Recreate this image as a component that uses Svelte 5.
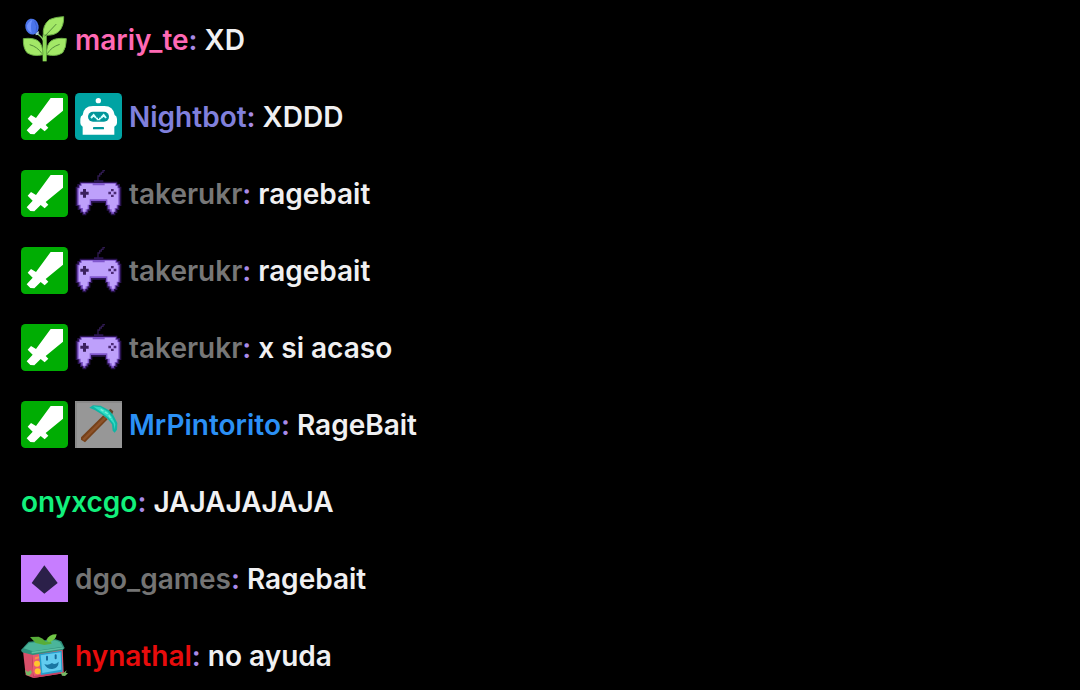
<script>
  const messages = [
    { badges: ['plant'], user: 'mariy_te', color: '#ff69b4', text: 'XD' },
    { badges: ['sword', 'bot'], user: 'Nightbot', color: '#8080dc', text: 'XDDD' },
    { badges: ['sword', 'pad'], user: 'takerukr', color: '#777777', text: 'ragebait' },
    { badges: ['sword', 'pad'], user: 'takerukr', color: '#777777', text: 'ragebait' },
    { badges: ['sword', 'pad'], user: 'takerukr', color: '#777777', text: 'x si acaso' },
    { badges: ['sword', 'pickaxe'], user: 'MrPintorito', color: '#2b90f5', text: 'RageBait' },
    { badges: [], user: 'onyxcgo', color: '#12f07c', text: 'JAJAJAJAJA' },
    { badges: ['gem'], user: 'dgo_games', color: '#747474', text: 'Ragebait' },
    { badges: ['house'], user: 'hynathal', color: '#e80c0c', text: 'no ayuda' }
  ];
</script>

{#snippet badge(kind)}
  {#if kind === 'sword'}
    <svg class="badge" viewBox="21 21 141 141" aria-hidden="true">
      <rect x="21" y="21" width="141" height="141" rx="13" fill="#00ad03" />
      <path d="M110 36H147V74L95 117L103 125L92 136L80 126L61 145L49 144L38 133L56 113L41 98L51 87L66 96Z" fill="#fff" />
    </svg>
  {:else if kind === 'bot'}
    <svg class="badge" viewBox="21 21 141 141" aria-hidden="true">
      <rect x="21" y="21" width="141" height="141" rx="13" fill="#00a3a3" />
      <circle cx="91" cy="44" r="8" fill="#fff" />
      <path d="M44 87Q47 60 75 60H109Q136 60 140 87Q147 90 147 99V111Q147 119 139 122V146H44V122Q37 119 37 111V99Q37 90 44 87Z" fill="#fff" />
      <rect x="60" y="77" width="63" height="30" rx="15" fill="#00979b" />
      <path d="M69 96L77 87L84 96M99 96L107 87L114 96" fill="none" stroke="#d8ffff" stroke-width="6" />
      <path d="M84 97H88V101H95V97H99" fill="none" stroke="#d8ffff" stroke-width="4" />
      <rect x="75" y="123" width="33" height="7" rx="2" fill="#00979b" />
    </svg>
  {:else if kind === 'pad'}
    <svg class="badge" viewBox="21 18 141 141" aria-hidden="true">
      <path d="M90 52V36H95V30H100V25H105V20H111" fill="none" stroke="#2f1a50" stroke-width="4" />
      <path d="M35 53H78V49H106V53H148V60H156V68H160V126H154V138H148V147H142V154H128V148H122V140H116V126H111V116H73V126H67V140H61V148H55V154H43V147H36V138H29V126H23V68H28V60H35Z" fill="#2a1350" />
      <path d="M38 57H145V64H151V71H155V124H149V134H143V143H138V149H130V143H125V136H119V123H114V111H69V123H63V136H58V143H52V149H46V143H40V134H34V124H28V71H33V64H38Z" fill="#8057cd" />
      <path d="M41 59H74V64H110V59H142V66H148V73H151V122H146V132H140V143H131V136H125V122H118V106H65V122H59V136H53V143H45V132H38V122H32V73H36V66H41Z" fill="#bea0fb" />
      <path d="M45 75H54V83H62V92H54V101H45V92H37V83H45Z" fill="#3b205d" />
      <path d="M129 75H137V82H129ZM121 83H129V91H121ZM137 83H145V91H137ZM129 92H137V99H129Z" fill="#4b2a75" />
    </svg>
  {:else if kind === 'pickaxe'}
    <svg class="badge" viewBox="21 18 141 141" aria-hidden="true">
      <rect x="21" y="18" width="141" height="141" fill="#979797" />
      <path d="M24 159V21H162" fill="none" stroke="#858585" stroke-width="4" />
      <path d="M119 49L127 41L136 49L132 59Z" fill="#604528" />
      <path d="M106 61L119 73L51 142L39 134V127Z" fill="#754019" />
      <path d="M108 66L114 71L48 137L43 132Z" fill="#8d5229" />
      <path d="M64 38L75 31L98 32L123 46L136 61L148 84L147 104L140 113L134 107L132 88L119 72L101 58L80 45Z" fill="#10b5a5" />
      <path d="M75 34L98 37L120 50L132 66L142 87L140 104L137 86L122 68L98 50Z" fill="#2fdcc5" />
      <path d="M98 43L120 57L131 74" fill="none" stroke="#7aeed8" stroke-width="4" stroke-dasharray="10 5" />
    </svg>
  {:else if kind === 'gem'}
    <svg class="badge" viewBox="21 18 141 141" aria-hidden="true">
      <rect x="21" y="18" width="141" height="141" fill="#c77dff" />
      <path d="M91 49L131 102L91 134L53 102Z" fill="#2b2049" />
    </svg>
  {:else if kind === 'plant'}
    <svg class="badge" viewBox="21 24 141 141" aria-hidden="true">
      <path d="M91 103Q86 88 69 77" fill="none" stroke="#8fce69" stroke-width="4" />
      <path d="M86 80H98V160H86Z" fill="#8ddc58" />
      <path d="M88 81Q85 52 106 35Q122 27 149 26Q150 54 135 70Q119 84 95 81Z" fill="#a3e867" stroke="#6caf45" stroke-width="3" />
      <path d="M28 92Q57 88 73 99Q87 111 87 140Q58 147 39 134Q27 120 28 92Z" fill="#a3e867" stroke="#6caf45" stroke-width="3" />
      <path d="M157 92Q127 88 111 99Q96 111 98 140Q128 147 146 134Q157 119 157 92Z" fill="#a3e867" stroke="#6caf45" stroke-width="3" />
      <path d="M92 85L127 48M84 137Q70 116 47 110M100 137Q112 117 137 109" fill="none" stroke="#568e3d" stroke-width="3" />
      <path d="M64 73L75 70L73 80L65 82Z" fill="#a9c9d0" />
      <ellipse cx="54" cy="56" rx="20" ry="24" transform="rotate(-13 54 56)" fill="#4a74ea" />
      <path d="M39 52Q47 37 55 36Q48 51 53 75Q38 68 39 52Z" fill="#6f92ff" />
      <path d="M62 39Q72 54 66 75" fill="none" stroke="#3d5fd0" stroke-width="3" />
    </svg>
  {:else}
    <svg class="badge" viewBox="21 18 141 141" aria-hidden="true">
      <path d="M27 75L55 83L58 156L35 147Z" fill="#d9506a" />
      <path d="M54 82L146 68L149 142L58 156Z" fill="#e95972" />
      <path d="M58 150L149 136V142L58 156Z" fill="#c83e60" />
      <path d="M75 84L143 74L146 137L81 147Z" fill="#249fcc" />
      <path d="M80 88L140 79L142 131L85 141Z" fill="#62ccef" />
      <path d="M99 92V101M125 88V97" stroke="#176b9b" stroke-width="6" stroke-linecap="round" />
      <path d="M91 114Q102 119 114 111Q123 118 134 107Q134 126 115 129Q98 130 91 114Z" fill="#1976a2" />
      <path d="M21 72L44 47L125 40L142 46L152 66L146 72L57 87L24 79Z" fill="#2f8f7c" />
      <path d="M29 67L45 51L123 43L137 48L146 62L57 76Z" fill="#4bb59a" />
      <path d="M53 80L148 66" fill="none" stroke="#5cc0a2" stroke-width="5" />
      <path d="M48 33L74 32Q88 36 95 47L110 45L113 53L91 57L65 51Z" fill="#58ad39" />
      <path d="M97 42Q106 24 128 25Q126 44 105 49Z" fill="#71c747" />
      <circle cx="69" cy="113" r="9" fill="#ffc52d" />
      <circle cx="71" cy="136" r="9" fill="#ffc52d" />
      <path d="M62 101L75 97V91L63 94Z" fill="#f59149" />
      <path d="M33 131L42 138L50 132L54 139L47 149L37 147ZM140 138L148 141L158 133L155 140L162 142L153 150L144 149Z" fill="#75b866" />
    </svg>
  {/if}
{/snippet}

<main class="chat">
  {#each messages as message}
    <div class="message">
      {#each message.badges as kind}
        {@render badge(kind)}
      {/each}
      <p><span style:color={message.color}>{message.user}</span><span class="colon">:</span> {message.text}</p>
    </div>
  {/each}
</main>

<style>
  :global(body) {
    margin: 0;
    background: #000;
  }

  .chat {
    display: flex;
    flex-direction: column;
    gap: 28px;
    padding: 16px 21px 9px;
    color: #f0f0f2;
    font: 600 28px/49px Inter, sans-serif;
  }

  .message {
    display: flex;
    align-items: flex-start;
    gap: 7px;
  }

  .badge {
    width: 47px;
    height: 47px;
    flex: none;
  }

  p {
    margin: 0;
    overflow-wrap: anywhere;
  }

  .colon {
    color: #a98be8;
  }
</style>
